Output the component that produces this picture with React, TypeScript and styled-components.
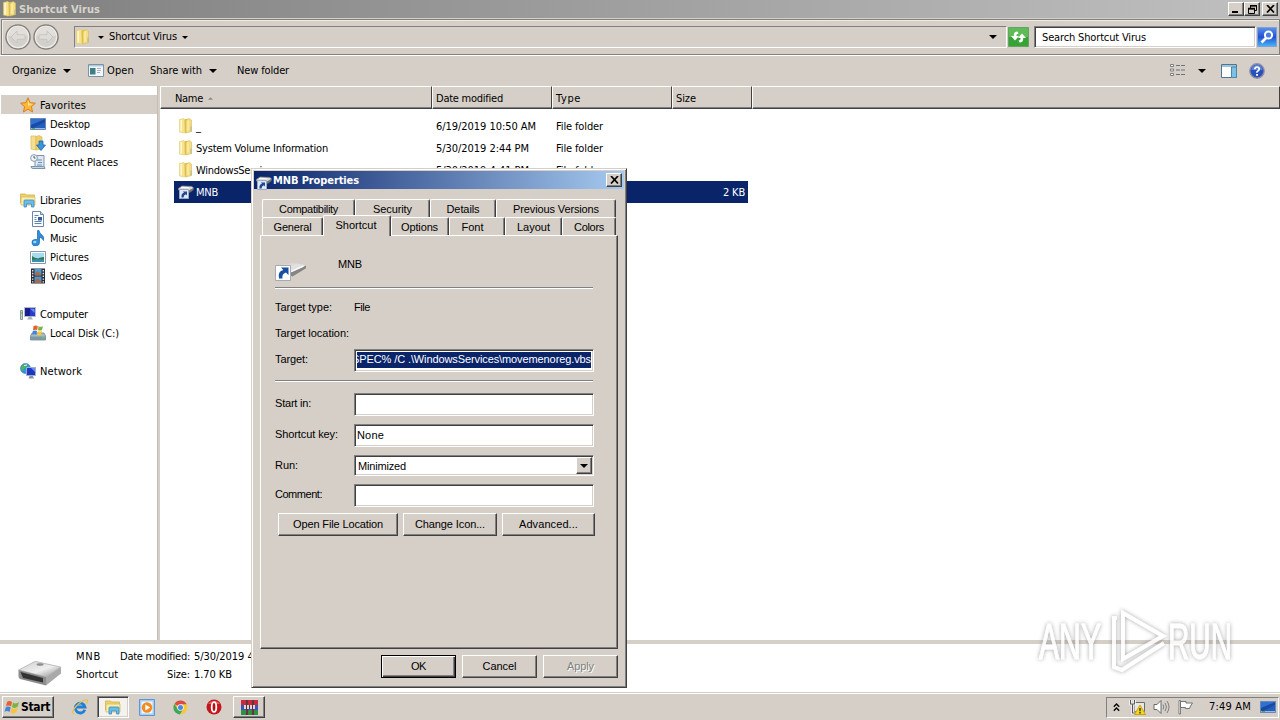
import React, { useLayoutEffect, useRef, useState } from "react";
import styled, { createGlobalStyle, css } from "styled-components";

const face = "#d5cfc8";
const navy = "#0a246a";
const ui = `"DejaVu Sans Condensed", "DejaVu Sans", sans-serif`;
const dlg = `"Liberation Sans", sans-serif`;

const Global = createGlobalStyle`
  body { margin: 0; background: #fff; overflow: hidden; }
  * { box-sizing: border-box; }
  svg { display: block; flex: none; }
`;

const raised = css`
  border: 1px solid;
  border-color: #fff #404040 #404040 #fff;
  box-shadow: inset -1px -1px 0 #808080;
  background: ${face};
`;
const sunken = css`
  border: 1px solid;
  border-color: #808080 #fff #fff #808080;
  box-shadow: inset 1px 1px 0 #404040, inset -1px -1px 0 #d5cfc8;
  background: #fff;
`;

/* ---------- text ---------- */
const CaptionText = styled.span`
  white-space: pre;
  flex: none;
  padding-top: var(--drop);
`;
function Caption({ w, children }: { w: number; children: string }) {
  const ref = useRef<HTMLSpanElement>(null);
  const [spacing, setSpacing] = useState(0);
  useLayoutEffect(() => {
    const natural = ref.current!.getBoundingClientRect().width;
    setSpacing((w - natural) / children.length);
  }, [w, children]);
  return (
    <CaptionText ref={ref} style={{ letterSpacing: spacing }}>
      {children}
    </CaptionText>
  );
}

/* ---------- shell ---------- */
const Screen = styled.div`
  --drop: 2px;
  position: relative;
  width: 1280px;
  height: 720px;
  overflow: hidden;
  display: flex;
  flex-direction: column;
  background: #fff;
  color: #000;
  font: 11px/14px ${ui};
`;
const TitleBar = styled.div`
  height: 18px;
  flex: none;
  display: flex;
  align-items: center;
  padding: 0 2px 0 2px;
  background: linear-gradient(90deg, #808080, #c0c0c0);
  color: #d8d4cc;
  font-weight: bold;
`;
const TitleText = styled.div`
  display: flex;
  flex: 1;
  margin-left: 1px;
`;
const WinButton = styled.div<{ $gap?: number }>`
  ${raised}
  width: 16px;
  height: 14px;
  margin-left: ${(p) => p.$gap ?? 0}px;
  display: flex;
  align-items: center;
  justify-content: center;
`;
const AddressRow = styled.div`
  height: 36px;
  flex: none;
  margin-left: 1px;
  margin-top: 1px;
  display: flex;
  align-items: center;
  padding: 0 1px 0 3px;
  background: ${face};
  border: 1px solid #808080;
  box-shadow: inset 1px 1px 0 #eeeae4;
`;
const TopArea = styled.div`
  background: ${face};
  display: flex;
  flex-direction: column;
  flex: none;
`;
const AddressBox = styled.div`
  --drop: 0px;
  border: 1px solid;
  border-color: #808080 #fff #fff #808080;
  height: 22px;
  width: 933px;
  margin-left: 13px;
  display: flex;
  align-items: center;
  padding: 0 9px 0 0;
`;
const Grow = styled.div`
  flex: 1;
`;
const Gap = styled.div<{ $w: number }>`
  width: ${(p) => p.$w}px;
  flex: none;
`;
const SearchBox = styled.div`
  ${sunken}
  width: 222px;
  height: 22px;
  margin-left: 5px;
  display: flex;
  align-items: center;
  padding-left: 7px;
`;
const Toolbar = styled.div`
  --drop: 0px;
  height: 31px;
  flex: none;
  display: flex;
  align-items: center;
  padding: 0 15px 1px 12px;
  border-top: 1px solid #fff;
`;

/* ---------- explorer body ---------- */
const Body = styled.div`
  flex: none;
  height: 554px;
  display: flex;
`;
const Sidebar = styled.div`
  width: 157px;
  padding: 9px 0 0 1px;
  display: flex;
  flex-direction: column;
`;
const NavRow = styled.div<{ $child?: boolean; $on?: boolean; $space?: boolean }>`
  height: 19px;
  flex: none;
  display: flex;
  align-items: center;
  gap: 4px;
  padding-left: ${(p) => (p.$child ? 29 : 19)}px;
  margin-top: ${(p) => (p.$space ? 19 : 0)}px;
  background: ${(p) => (p.$on ? face : "transparent")};
`;
const Splitter = styled.div`
  width: 3px;
  background: ${face};
  border-left: 1px solid #c2beb6;
`;
const ListPane = styled.div`
  flex: 1;
  display: flex;
  flex-direction: column;
`;
const HeaderRow = styled.div`
  display: flex;
  height: 23px;
  flex: none;
`;
const HeaderCell = styled.div<{ $w?: number; $pad: number }>`
  ${(p) => (p.$w ? `width: ${p.$w}px;` : "flex: 1;")}
  border: 1px solid;
  border-color: #fff #404040 #404040 #fff;
  box-shadow: inset 0 -1px 0 #808080;
  background: ${face};
  padding: 1px 0 0 ${(p) => p.$pad}px;
  display: flex;
  align-items: center;
  gap: 5px;
`;
const Files = styled.div`
  padding: 6px 0 0 14px;
`;
const FileRow = styled.div<{ $on?: boolean }>`
  display: grid;
  grid-template-columns: 258px 120px 119px 74px 3px;
  width: 574px;
  height: 22px;
  align-items: center;
  background: ${(p) => (p.$on ? navy : "transparent")};
  color: ${(p) => (p.$on ? "#fff" : "#000")};
`;
const FileName = styled.div`
  display: flex;
  align-items: center;
  gap: 2px;
  padding-left: 4px;
`;
const Cell = styled.div<{ $right?: boolean }>`
  display: flex;
  padding-left: 4px;
  justify-content: ${(p) => (p.$right ? "flex-end" : "flex-start")};
`;
const DetailsPane = styled.div`
  height: 52px;
  flex: none;
  border-top: 4px solid ${face};
  display: flex;
  padding: 3px 0 0 17px;
`;
const DetailsGrid = styled.div`
  display: grid;
  grid-template-columns: 44px 70px 60px;
  grid-auto-rows: 18px;
  align-items: center;
  margin-left: 13px;
`;
const DCell = styled.div<{ $right?: boolean; $pad?: number }>`
  display: flex;
  padding-left: ${(p) => p.$pad ?? 0}px;
  justify-content: ${(p) => (p.$right ? "flex-end" : "flex-start")};
`;

/* ---------- taskbar ---------- */
const Taskbar = styled.div`
  --drop: 0px;
  flex: 1;
  border-top: 1px solid ${face};
  box-shadow: inset 0 1px 0 #fff;
  background: ${face};
  display: flex;
  align-items: center;
  padding: 1px 1px 0 2px;
`;
const StartButton = styled.div`
  ${raised}
  width: 52px;
  height: 22px;
  display: flex;
  align-items: center;
  gap: 1px;
  padding-left: 1px;
  font-weight: bold;
  font-size: 12px;
`;
const TaskButton = styled.div<{ $pressed?: boolean }>`
  ${(p) => (p.$pressed ? sunken : raised)}
  ${(p) => (p.$pressed ? "background:#f4f2ef;" : "")}
  width: 32px;
  height: 22px;
  display: flex;
  align-items: center;
  justify-content: center;
`;
const Tray = styled.div`
  border: 1px solid;
  border-color: #808080 #fff #fff #808080;
  width: 173px;
  height: 21px;
  display: flex;
  align-items: center;
  padding-left: 6px;
`;

/* ---------- dialog ---------- */
const Dialog = styled.div`
  --drop: 0px;
  position: absolute;
  left: 251px;
  top: 168px;
  width: 376px;
  height: 520px;
  background: ${face};
  border: 1px solid;
  border-color: ${face} #404040 #404040 ${face};
  box-shadow: inset 1px 1px 0 #fff, inset -1px -1px 0 #808080;
  padding: 2px;
  display: flex;
  flex-direction: column;
  font: 11px/14px ${dlg};
`;
const DialogTitle = styled.div`
  --drop: 2px;
  height: 18px;
  flex: none;
  background: linear-gradient(90deg, ${navy}, #a6caf0);
  color: #fff;
  font: bold 11px/14px ${ui};
  display: flex;
  align-items: center;
  padding: 0 2px 0 2px;
`;
const TitleIcon = styled.div`
  padding-top: 5px;
`;
const TabRow = styled.div<{ $front?: boolean }>`
  display: flex;
  align-items: flex-end;
  height: 18px;
  flex: none;
  padding-left: 8px;
  margin-top: ${(p) => (p.$front ? 0 : 10)}px;
`;
const Tab = styled.div<{ $w: number; $on?: boolean; $shift?: number }>`
  width: ${(p) => p.$w}px;
  height: ${(p) => (p.$on ? 21 : 18)}px;
  margin-bottom: ${(p) => (p.$on ? -1 : 0)}px;
  position: relative;
  z-index: ${(p) => (p.$on ? 2 : 0)};
  flex: none;
  background: ${face};
  border: 1px solid;
  border-color: #fff #404040 transparent #fff;
  border-bottom: 0;
  border-radius: 2px 2px 0 0;
  box-shadow: inset -1px 0 0 #808080;
  display: flex;
  justify-content: center;
  padding-top: 2px;
  padding-right: ${(p) => p.$shift ?? 0}px;
`;
const Page = styled.div`
  margin: 0 6px;
  height: 414px;
  flex: none;
  border: 1px solid;
  border-color: #fff #404040 #404040 #fff;
  box-shadow: inset -1px -1px 0 #808080;
  padding: 21px 22px 0 14px;
  display: flex;
  flex-direction: column;
`;
const IconRow = styled.div`
  display: flex;
  height: 30px;
`;
const IconSlot = styled.div`
  padding-top: 3px;
`;
const Rule = styled.div<{ $mt: number }>`
  height: 2px;
  width: 318px;
  flex: none;
  margin-top: ${(p) => p.$mt}px;
  border-top: 1px solid #808080;
  border-bottom: 1px solid #fff;
`;
const Field = styled.div<{ $mt: number; $h: number }>`
  display: grid;
  grid-template-columns: 79px 240px;
  height: ${(p) => p.$h}px;
  margin-top: ${(p) => p.$mt}px;
  flex: none;
`;
const FieldLabel = styled.div`
  display: flex;
  padding-top: 3px;
`;
const Input = styled.div`
  ${sunken}
  display: flex;
  align-items: center;
  padding: 0 2px 2px 2px;
  overflow: hidden;
`;
const ComboInput = styled(Input)`
  padding: 0 1px 0 3px;
`;
const Selected = styled.div`
  display: flex;
  flex: 1;
  height: 16px;
  padding-bottom: 1px;
  align-items: center;
  justify-content: flex-end;
  overflow: hidden;
  background: ${navy};
  color: #fff;
`;
const DropButton = styled.div`
  ${raised}
  width: 16px;
  height: 17px;
  margin-left: auto;
  display: flex;
  align-items: center;
  justify-content: center;
`;
const ButtonRow = styled.div<{ $gap: number }>`
  display: flex;
  gap: ${(p) => p.$gap}px;
`;
const Button = styled.div<{ $w: number; $def?: boolean; $off?: boolean }>`
  ${raised}
  ${(p) => (p.$def ? "border-color:#000; box-shadow: inset 1px 1px 0 #fff, inset -1px -1px 0 #404040, inset -2px -2px 0 #808080;" : "")}
  ${(p) => (p.$off ? "color:#808080; text-shadow: 1px 1px 0 #fff;" : "")}
  width: ${(p) => p.$w}px;
  height: 23px;
  flex: none;
  display: flex;
  align-items: center;
  justify-content: center;
  padding-bottom: 1px;
`;
const PageButtons = styled(ButtonRow)`
  margin: 6px 0 0 3px;
`;
const Footer = styled(ButtonRow)`
  justify-content: flex-end;
  margin: 6px 6px 0 0;
`;
const Watermark = styled.svg`
  position: absolute;
  left: 1030px;
  top: 600px;
  overflow: visible;
`;

/* ---------- icons ---------- */
const Arrow = ({ w = 8, c = "#000" }: { w?: number; c?: string }) => (
  <svg width={w} height={w / 2} viewBox="0 0 8 4"><path d="M0 0h8L4 4z" fill={c} /></svg>
);
const Folder = () => (
  <svg width="16" height="16" viewBox="0 0 16 16">
    <path d="M1.500 1.500L6 .5l1 1v13l-1 .5-4.500-1z" fill="#f6e391" stroke="#e2c972" strokeWidth=".6" />
    <path d="M6.500 1.500L9.500.5v13L7 15.500z" fill="#e4bf4c" />
    <path d="M8 2.500l3-2 2.500 1.500v11.500L8 15z" fill="#f5de82" stroke="#dcb850" strokeWidth=".6" />
    <path d="M3.200 2v11.500" stroke="#fff7cf" strokeWidth="1.500" />
    <path d="M10 2.500v10" stroke="#fbeeb0" strokeWidth="1.300" />
    <path d="M13 8.500v5" stroke="#a3b89a" />
  </svg>
);
const Star = () => (
  <svg width="16" height="16" viewBox="0 0 16 16">
    <path d="M8 .8l2.100 4.900 5.300.5-4 3.500 1.200 5.300L8 12.200 3.400 15l1.200-5.300-4-3.500 5.300-.5z" fill="#fbb938" stroke="#e07c1c" />
    <path d="M8 3l1.300 3.600 3.500.3L8 9z" fill="#ffe58a" />
  </svg>
);
const Monitor = () => (
  <svg width="16" height="16" viewBox="0 0 16 16">
    <path d="M.5 2.500h15v11H.5z" fill="#1a4aa6" stroke="#6c88b4" />
    <path d="M1 3h14L1 9z" fill="#2f72d2" />
    <path d="M3 12l12-6v6z" fill="#2360bd" />
    <path d="M1 12.500h14" stroke="#9db9d8" />
    <path d="M2 12.500h3" stroke="#49ae4f" />
  </svg>
);
const Downloads = () => (
  <svg width="16" height="16" viewBox="0 0 16 16">
    <path d="M1 1h5v14l-5-1z" fill="#f5df8e" stroke="#d9b757" strokeWidth=".7" />
    <path d="M6 1.500L9 .5l3 1.500v12l-6 1z" fill="#efcf6c" stroke="#d9b757" strokeWidth=".7" />
    <path d="M9 6h4v4h2.500L11 15.500 6.500 10H9z" fill="#3a95dc" stroke="#1d65aa" strokeWidth=".8" />
  </svg>
);
const Recent = () => (
  <svg width="16" height="16" viewBox="0 0 16 16">
    <path d="M5 1.500h9v12H5z" fill="#dde8f2" stroke="#7f93a8" />
    <path d="M1 12.500h12q2 0 2 2H3q-2 0-2-2z" fill="#c9d7e4" stroke="#7f93a8" />
    <path d="M7 6h5M8 8.500h4M7 11h5" stroke="#668db5" />
    <circle cx="4" cy="4" r="3.400" fill="#eef3f8" stroke="#8b9aab" />
    <path d="M4 2v2h1.500" stroke="#45617d" fill="none" />
  </svg>
);
const Libraries = () => (
  <svg width="16" height="16" viewBox="0 0 16 16">
    <path d="M.5 3.500V2h5l1 1h8v8H.5z" fill="#f0d26a" stroke="#cfae4b" strokeWidth=".8" />
    <path d="M1 5h14v8H1z" fill="#fbeea9" stroke="#d7bb5f" strokeWidth=".8" />
    <path d="M4 15V9q0-1 1-1h8q1 0 1 1v6h-2.500v-3h-5v3z" fill="#6cbce6" stroke="#3b8cc0" strokeWidth=".8" />
  </svg>
);
const Doc = () => (
  <svg width="16" height="16" viewBox="0 0 16 16">
    <path d="M2.500.5h8l3 3v12h-11z" fill="#fff" stroke="#6d87a8" />
    <path d="M10.500.5v3h3" fill="#c8d8e8" stroke="#6d87a8" />
    <path d="M4.500 4.500h4M4.500 6.500h2M4.500 8.500h2M4.500 10.500h7M4.500 12.500h7" stroke="#5a85b4" />
    <path d="M8 6h4v3.500H8z" fill="#335c9d" />
  </svg>
);
const Note = () => (
  <svg width="16" height="16" viewBox="0 0 16 16">
    <path d="M7.500.5H9q.5 3 3 4.500t1.500 5.500q-1-2.500-4-3.500v5.500q0 3-3.500 3.500T2 13t3-3.500 2.500 0z" fill="#2f8fd8" stroke="#1d67ad" strokeWidth=".7" />
    <ellipse cx="4.800" cy="12" rx="1.700" ry="1.200" fill="#9cd6f6" />
  </svg>
);
const Picture = () => (
  <svg width="16" height="16" viewBox="0 0 16 16">
    <path d="M.5 2.500h15v12H.5z" fill="#fff" stroke="#8799ab" />
    <path d="M2 4h12v5H2z" fill="#a5daf0" />
    <path d="M2 7q4 3 7 2t5-1v4H2z" fill="#2f7d55" />
    <path d="M2 11q6-1.500 12 0v2H2z" fill="#3c90b8" />
  </svg>
);
const Video = () => (
  <svg width="16" height="16" viewBox="0 0 16 16">
    <path d="M1 .5h14v15H1z" fill="#262a35" />
    <path d="M4.500 1h7v6.500h-7zM4.500 8.500h7V15h-7z" fill="#4a9cd2" />
    <path d="M5 5l3-2 3 3v1.500H5zM5 12l3-2 3 3v2H5z" fill="#a46b53" />
    <path d="M2.700 2v13M13.300 2v13" stroke="#e5e9ee" strokeWidth="1.400" strokeDasharray="1.400 1.400" />
  </svg>
);
const Computer = () => (
  <svg width="16" height="16" viewBox="0 0 16 16">
    <path d="M.5 4.500h2v9h-2z" fill="#c7d4c9" stroke="#8b9a90" />
    <path d="M4.500 1.500h11v9h-11z" fill="#2a3ccc" stroke="#b3bbc9" />
    <path d="M5 2h5v8H5z" fill="#1a1e90" />
    <path d="M10 2.500l4.500.5v4z" fill="#6f8cf0" />
    <path d="M8.500 11h3l1.500 2.500H7z" fill="#a9b3bd" />
    <path d="M1 7h2" stroke="#45b54b" />
  </svg>
);
const Flag4 = ({ s = 16 }: { s?: number }) => (
  <svg width={s} height={s} viewBox="0 0 16 16">
    <path d="M3 3q2.500-2 5 0L7 7.500q-2.500-2-5 0z" fill="#e8602c" />
    <path d="M9 3.500q3 2 6-.5l-1.200 4.500q-3 2.500-5.800.5z" fill="#7cb342" />
    <path d="M1.700 8.500q2.500-2 5 0L5.500 13q-2.500-2-5 0z" fill="#3f87dc" />
    <path d="M7.700 9q3 2 6-.5L12.500 13q-3 2.500-6 .5z" fill="#f9c62f" />
  </svg>
);
const LocalDisk = () => (
  <svg width="16" height="16" viewBox="0 0 16 16">
    <path d="M2 8h12l1.500 3v4H.5v-4z" fill="#a9bcc6" stroke="#71858f" strokeWidth=".8" />
    <path d="M.5 11.500h15V15H.5z" fill="#7d97a3" />
    <path d="M12 13h2.500" stroke="#5be05e" />
    <path d="M3.500 1q2-1 4.300 0l-.6 4.300q-2-1-4.200 0z" fill="#e8602c" />
    <path d="M8.500 1.200q2 1.200 4.500 0l-1 3.800q-2 1-4 0z" fill="#7cb342" />
    <path d="M2.800 6q2-1 4.200 0L6.500 9.700q-2-1-4.300 0z" fill="#3f87dc" />
    <path d="M7.700 5.900q2 1 4.300 0L11 10q-2 .8-4-.3z" fill="#f9c62f" />
  </svg>
);
const Network = () => (
  <svg width="16" height="16" viewBox="0 0 16 16">
    <circle cx="5.500" cy="5.500" r="5" fill="#2e98cf" stroke="#2378ac" strokeWidth=".6" />
    <path d="M2 3q3-3 6-1L5 4.500 2 8Q0 6 2 3z" fill="#56b551" />
    <path d="M4 2.500l3-.5" stroke="#e5f6fb" />
    <path d="M6.500 4.500h9v8h-9z" fill="#1e36c4" stroke="#9fb0c6" />
    <path d="M11 5h4v4z" fill="#6a8cf0" />
    <path d="M9.500 13h3.500l1 2.500H8.500z" fill="#8795a2" />
  </svg>
);
const Shortcut = () => (
  <svg width="16" height="16" viewBox="0 0 16 16">
    <path d="M.5 4.500L4 2l10 .5 1.500 1.500-3 3.500H9L.5 6z" fill="#dcdcdc" stroke="#8e8e8e" strokeWidth=".7" />
    <path d="M3 3.500l8 .3" stroke="#fff" />
    <path d="M10.500 6.500L15.500 4v2l-4 3z" fill="#777" />
    <path d="M1.500 5.500h9v9h-9z" fill="#dfe6f4" stroke="#9aa8c4" />
    <path d="M3.500 13.500q-.5-4 2.500-4.800L4.800 7.500H9v4L7.800 10.200Q5.500 11 5.500 13.500z" fill="#1e478e" />
  </svg>
);
const BigShortcut = () => (
  <svg width="32" height="22" viewBox="0 0 32 22">
    <path d="M3 5.500l14-2.500 13 2-13 8z" fill="#ddd8d3" />
    <path d="M14 6l8-2.500 9 2-10 6.500-7-2z" fill="#e0e0e0" />
    <path d="M15.500 12.500L31 5.500v2.800L17.500 16.500l-2-1z" fill="#858585" />
    <path d="M16 11.500L28.500 6" stroke="#fafafa" strokeWidth="1.500" />
    <path d="M.5 5.500h15v15H.5z" fill="#fff" stroke="#a5a9b1" />
    <path d="M4 18.500q-1.500-7.500 4.300-8.500L6 7.500h7.500V15l-2.600-2.500Q6.500 14 7.500 18.500z" fill="#194f9e" />
  </svg>
);
const Drive = () => (
  <svg width="46" height="42" viewBox="0 0 46 42">
    <defs>
      <linearGradient id="drv" x1="0" y1="0" x2="1" y2="1">
        <stop offset="0" stopColor="#cfcfcf" /><stop offset=".55" stopColor="#efefef" /><stop offset="1" stopColor="#8b8b8b" />
      </linearGradient>
    </defs>
    <path d="M1.500 23L17 15q2-1 4 0l22.500 5L29 30z" fill="url(#drv)" stroke="#b0b0b0" strokeWidth=".8" />
    <path d="M1.500 23L29 30v8.500L3 32q-1.500-1-1.500-3z" fill="#8c8c8c" />
    <path d="M3.500 25L26 31v4.500L6 31z" fill="#333" />
    <path d="M29 30l15-10v6.500L29 38.500z" fill="#a9a9a9" />
    <ellipse cx="23" cy="17.500" rx="3.500" ry="1.200" fill="#8c8c8c" />
  </svg>
);
const OpenIcon = () => (
  <svg width="16" height="13" viewBox="0 0 16 13">
    <path d="M.5.5h15v12H.5z" fill="#f5f8fa" stroke="#7a93a8" />
    <path d="M1 1h14v1.500H1z" fill="#b3cad9" />
    <path d="M2 4h5.500v6.500H2z" fill="#3e7f86" />
    <path d="M9 4.500h4M9 6.500h4M9 8.500h3" stroke="#a2b0bd" />
  </svg>
);
const NavCircle = ({ back }: { back?: boolean }) => (
  <svg width="26" height="26" viewBox="0 0 26 26">
    <circle cx="13" cy="13" r="12" fill="#d3cfca" stroke="#84827f" strokeWidth="1.500" />
    <circle cx="13" cy="13" r="10.600" fill="none" stroke="#eeece9" strokeWidth="1.200" />
    <path d="M3.500 12a9.500 9.500 0 0 1 19 0z" fill="#e2dfdb" />
    <path transform={back ? "" : "matrix(-1 0 0 1 26 0)"} d="M6 13l6-6v3.700h8v4.600h-8V19z" fill="#dfdcd7" stroke="#c6c2bc" strokeWidth=".9" />
  </svg>
);
const Refresh = () => (
  <svg width="21" height="20" viewBox="0 0 21 20">
    <path d="M.5.5h20v19H.5z" fill="#37a336" stroke="#62a560" />
    <path d="M1 1h19v9H1z" fill="#5fba58" />
    <path d="M9.500 4.500Q5.500 4.500 5.800 9H3l4 4.500L11 9H8.300Q8.300 6.500 10.500 6.500z" fill="#fff" />
    <path d="M11.500 15.500q4 0 3.700-4.500H18l-4-4.500L10 11h2.700q0 2.500-2.200 2.500z" fill="#fff" />
  </svg>
);
const SearchBtn = () => (
  <svg width="20" height="20" viewBox="0 0 20 20">
    <defs><linearGradient id="sb" x2="0" y2="1"><stop offset="0" stopColor="#5d92e6" /><stop offset=".5" stopColor="#2450d8" /><stop offset="1" stopColor="#48b7f2" /></linearGradient></defs>
    <path d="M.5.5h19v19H.5z" fill="url(#sb)" stroke="#7da2dd" />
    <circle cx="11.500" cy="8" r="3.600" fill="#4a7ee6" stroke="#fff" strokeWidth="2" />
    <path d="M9 11l-4.500 4.500" stroke="#fff" strokeWidth="2.600" />
  </svg>
);
const ViewIcon = () => (
  <svg width="16" height="13" viewBox="0 0 16 13">
    <path d="M.5.5h3v2h-3zM.5 5h3v2h-3zM.5 9.500h3v2h-3z" fill="#fff" stroke="#7c7c80" />
    <path d="M6 1.500h4m1 0h4M6 6h4m1 0h4M6 10.500h4m1 0h4" stroke="#6d7279" />
  </svg>
);
const PaneIcon = () => (
  <svg width="16" height="14" viewBox="0 0 16 14">
    <path d="M.5.500h15v13H.5z" fill="#fff" stroke="#4f7590" />
    <path d="M1 1h14v2H1z" fill="#9ec3da" />
    <path d="M10.500 3v10.500h5V3z" fill="#7cc0e6" stroke="#4f86a8" />
  </svg>
);
const Help = () => (
  <svg width="16" height="16" viewBox="0 0 16 16">
    <circle cx="8" cy="8" r="7.200" fill="#2a4fb8" stroke="#8c93ab" strokeWidth="1.400" />
    <path d="M2.500 7a5.500 5 0 0 1 11 0z" fill="#5f83da" />
    <path d="M5.800 6.300Q6 4 8.100 4t2.100 2.100Q10 7.300 8.800 7.900T8 9.700" fill="none" stroke="#fff" strokeWidth="1.700" />
    <path d="M7.100 11h1.900v1.800H7.100z" fill="#fff" />
  </svg>
);
const IE = () => (
  <svg width="18" height="18" viewBox="0 0 18 18">
    <path d="M13.800 11.800A4.900 4.900 0 1 1 14 9H5.500" fill="none" stroke="#1f80d8" strokeWidth="2.800" />
    <path d="M2.500 16Q0 13.500 6 7.500T16 2q1.500 1-.4 3.600" fill="none" stroke="#e8c04a" strokeWidth="1.200" />
  </svg>
);
const Media = () => (
  <svg width="16" height="17" viewBox="0 0 16 17">
    <path d="M.5.500h15v16H.5z" fill="#a9cdf0" stroke="#5d96d4" />
    <path d="M2.500 2.500h11v12h-11z" fill="#eef6fd" />
    <circle cx="8" cy="8.500" r="5.200" fill="#f38b1d" />
    <path d="M6.300 5.400v6.200L11.300 8.500z" fill="#fff" />
  </svg>
);
const Chrome = () => (
  <svg width="15" height="15" viewBox="0 0 16 16">
    <circle cx="8" cy="8" r="7.300" fill="#f8c934" />
    <path d="M8 8L1.500 4.200A7.500 7.500 0 0 1 14.600 4.500H8z" fill="#dd4b3e" />
    <path d="M1.500 4.200A7.500 7.500 0 0 0 7.300 15.500L11 9.700 8 8 5 9.500z" fill="#3fa75a" />
    <circle cx="8" cy="8" r="3.500" fill="#f5f8fb" /><circle cx="8" cy="8" r="2.700" fill="#4a87e8" />
  </svg>
);
const Opera = () => (
  <svg width="16" height="16" viewBox="0 0 16 16">
    <circle cx="8" cy="8" r="7.500" fill="#c8141b" />
    <path d="M2 5a7 6 0 0 1 12 0z" fill="#e65a58" />
    <ellipse cx="8" cy="8" rx="2.300" ry="4.900" fill="#b30f16" stroke="#fff" strokeWidth="1.800" />
  </svg>
);
const Rar = () => (
  <svg width="17" height="15" viewBox="0 0 17 15">
    <path d="M0 0h17v5H0z" fill="#c92a3e" /><path d="M0 5h17v5H0z" fill="#3858b8" /><path d="M0 10h17v5H0z" fill="#2f8f45" />
    <path d="M5 0h2v15H5zM11 0h2v15h-2z" fill="#6a3140" />
    <path d="M3 5h11v4H3z" fill="#e3d6cf" /><path d="M5.500 5v4M8.500 5v4M11.500 5v4" stroke="#4b3340" />
  </svg>
);
const TrayArrows = () => (
  <svg width="7" height="9" viewBox="0 0 7 9"><path d="M.8 3.800L3.500 1l2.700 2.800M.8 7.800L3.500 5l2.700 2.800" fill="none" stroke="#000" strokeWidth="1.300" /></svg>
);
const TrayNet = () => (
  <svg width="17" height="16" viewBox="0 0 17 16">
    <path d="M5 3.500h10.500v9H5z" fill="#e9e7e3" stroke="#6c6c6c" />
    <path d="M1.500 1v4h4V1M3.500 5v9h4" fill="none" stroke="#fff" strokeWidth="2.600" />
    <path d="M1.500 1v4h4V1M3.500 5v9h4" fill="none" stroke="#555" strokeWidth="1.100" />
    <path d="M11 6l5.500 9.500h-11z" fill="#f9d616" stroke="#b99800" strokeWidth=".8" />
    <path d="M11 9v3.200M11 13v1.400" stroke="#222" strokeWidth="1.300" />
  </svg>
);
const Speaker = () => (
  <svg width="17" height="16" viewBox="0 0 17 16">
    <path d="M1 5.500h3L8 1.500v13L4 10.500H1z" fill="#fff" stroke="#686868" />
    <path d="M10 5.500q1.500 2.500 0 5M12 3.800q3 4.200 0 8.400M14 2q4 6 0 12" fill="none" stroke="#808080" />
  </svg>
);
const TrayFlag = () => (
  <svg width="17" height="16" viewBox="0 0 17 16">
    <path d="M2 1.500h1.500V15H2z" fill="#fff" stroke="#666" strokeWidth=".8" />
    <path d="M3.500 2.500H9V4h6.500l-2 3-1 2.500H8.500V8.500h-5z" fill="#fff" stroke="#666" strokeWidth=".9" />
  </svg>
);

/* ---------- data ---------- */
const nav: { t: string; w: number; icon: React.ReactNode; child?: boolean; on?: boolean; space?: boolean }[] = [
  { t: "Favorites", w: 46, icon: <Star />, on: true },
  { t: "Desktop", w: 40, icon: <Monitor />, child: true },
  { t: "Downloads", w: 53, icon: <Downloads />, child: true },
  { t: "Recent Places", w: 68, icon: <Recent />, child: true },
  { t: "Libraries", w: 41, icon: <Libraries />, space: true },
  { t: "Documents", w: 54, icon: <Doc />, child: true },
  { t: "Music", w: 27, icon: <Note />, child: true },
  { t: "Pictures", w: 39, icon: <Picture />, child: true },
  { t: "Videos", w: 32, icon: <Video />, child: true },
  { t: "Computer", w: 48, icon: <Computer />, space: true },
  { t: "Local Disk (C:)", w: 69, icon: <LocalDisk />, child: true },
  { t: "Network", w: 42, icon: <Network />, space: true },
];
const files: { n: string; nw: number; d?: string; dw?: number; size?: string }[] = [
  { n: "_", nw: 7, d: "6/19/2019 10:50 AM", dw: 100 },
  { n: "System Volume Information", nw: 132, d: "5/30/2019 2:44 PM", dw: 93 },
  { n: "WindowsServices", nw: 82, d: "5/30/2019 4:41 PM", dw: 93 },
  { n: "MNB", nw: 22, size: "2 KB" },
];
const backTabs: [string, number, number][] = [["Compatibility", 93, 59], ["Security", 75, 39], ["Details", 66, 33], ["Previous Versions", 120, 86]];

export default function App() {
  return (
    <Screen>
      <Global />
      <TopArea>
        <TitleBar>
          <Folder />
          <TitleText><Caption w={81}>Shortcut Virus</Caption></TitleText>
          <WinButton><svg width="8" height="8"><path d="M0 6h6v2H0z" /></svg></WinButton>
          <WinButton><svg width="9" height="9" viewBox="0 0 9 9"><path d="M2.500 3V1h6v4.500H7M.5 4h6v4.500h-6z" fill="none" stroke="#000" /><path d="M2 .5h7M0 3.500h7" stroke="#000" strokeWidth="1.500" /></svg></WinButton>
          <WinButton $gap={2}><svg width="9" height="8" viewBox="0 0 9 8"><path d="M1 0l7 7.500M8 0L1 7.500" stroke="#000" strokeWidth="1.700" /></svg></WinButton>
        </TitleBar>
        <AddressRow>
          <NavCircle back />
          <Gap $w={2} />
          <NavCircle />
          <Gap $w={2} />
          <AddressBox>
            <Folder />
            <Gap $w={7} />
            <Arrow w={6} />
            <Gap $w={5} />
            <Caption w={68}>Shortcut Virus</Caption>
            <Gap $w={5} />
            <Arrow w={6} />
            <Grow />
            <Arrow />
          </AddressBox>
          <Gap $w={1} />
          <Refresh />
          <SearchBox><Caption w={104}>Search Shortcut Virus</Caption></SearchBox>
          <Gap $w={1} />
          <SearchBtn />
        </AddressRow>
        <Toolbar>
          <Caption w={44}>Organize</Caption>
          <Gap $w={7} /><Arrow />
          <Gap $w={17} /><OpenIcon />
          <Gap $w={3} /><Caption w={27}>Open</Caption>
          <Gap $w={16} /><Caption w={52}>Share with</Caption>
          <Gap $w={7} /><Arrow />
          <Gap $w={20} /><Caption w={52}>New folder</Caption>
          <Grow />
          <ViewIcon /><Gap $w={12} /><Arrow />
          <Gap $w={15} /><PaneIcon /><Gap $w={12} /><Help />
        </Toolbar>
      </TopArea>
      <Body>
        <Sidebar>
          {nav.map((i) => (
            <NavRow key={i.t} $child={i.child} $on={i.on} $space={i.space}>
              {i.icon}<Caption w={i.w}>{i.t}</Caption>
            </NavRow>
          ))}
        </Sidebar>
        <Splitter />
        <ListPane>
          <HeaderRow>
            <HeaderCell $w={272} $pad={14}>
              <Caption w={28}>Name</Caption>
              <svg width="5" height="3" viewBox="0 0 6 3"><path d="M0 3h6L3 0z" fill="#8d8a86" /></svg>
            </HeaderCell>
            <HeaderCell $w={120} $pad={3}><Caption w={67}>Date modified</Caption></HeaderCell>
            <HeaderCell $w={120} $pad={3}><Caption w={25}>Type</Caption></HeaderCell>
            <HeaderCell $w={80} $pad={3}><Caption w={20}>Size</Caption></HeaderCell>
            <HeaderCell $pad={0} />
          </HeaderRow>
          <Files>
            {files.map((f) => (
              <FileRow key={f.n} $on={!!f.size}>
                <FileName>{f.size ? <Shortcut /> : <Folder />}<Caption w={f.nw}>{f.n}</Caption></FileName>
                <Cell>{f.d && <Caption w={f.dw!}>{f.d}</Caption>}</Cell>
                <Cell>{f.d && <Caption w={47}>File folder</Caption>}</Cell>
                <Cell $right>{f.size && <Caption w={22}>{f.size}</Caption>}</Cell>
              </FileRow>
            ))}
          </Files>
        </ListPane>
      </Body>
      <DetailsPane>
        <Drive />
        <DetailsGrid>
          <DCell><Caption w={25}>MNB</Caption></DCell>
          <DCell $right><Caption w={70}>Date modified:</Caption></DCell>
          <DCell $pad={4}><Caption w={93}>5/30/2019 4:41 PM</Caption></DCell>
          <DCell><Caption w={42}>Shortcut</Caption></DCell>
          <DCell $right><Caption w={23}>Size:</Caption></DCell>
          <DCell $pad={4}><Caption w={38}>1.70 KB</Caption></DCell>
        </DetailsGrid>
      </DetailsPane>
      <Taskbar>
        <StartButton><Flag4 /><Caption w={29}>Start</Caption></StartButton>
        <Gap $w={17} /><IE /><Gap $w={8} />
        <TaskButton $pressed><Libraries /></TaskButton>
        <Gap $w={10} /><Media />
        <Gap $w={18} /><Chrome />
        <Gap $w={18} /><Opera />
        <Gap $w={11} />
        <TaskButton><Rar /></TaskButton>
        <Grow />
        <Tray>
          <TrayArrows /><Gap $w={9} /><TrayNet /><Gap $w={7} /><Speaker /><Gap $w={7} /><TrayFlag />
          <Gap $w={15} /><Caption w={42}>7:49 AM</Caption><Gap $w={9} /><Monitor />
        </Tray>
      </Taskbar>

      <Dialog>
        <DialogTitle>
          <TitleIcon><Shortcut /></TitleIcon>
          <Gap $w={1} />
          <Caption w={86}>MNB Properties</Caption>
          <Grow />
          <WinButton><svg width="9" height="8" viewBox="0 0 9 8"><path d="M1 0l7 7.500M8 0L1 7.500" stroke="#000" strokeWidth="1.700" /></svg></WinButton>
        </DialogTitle>
        <TabRow>
          {backTabs.map(([t, w, tw]) => (
            <Tab key={t} $w={w}><Caption w={tw}>{t}</Caption></Tab>
          ))}
        </TabRow>
        <TabRow $front>
          <Tab $w={61}><Caption w={38}>General</Caption></Tab>
          <Tab $w={68} $on $shift={2}><Caption w={41}>Shortcut</Caption></Tab>
          <Tab $w={58} $shift={1}><Caption w={37}>Options</Caption></Tab>
          <Tab $w={56} $shift={9}><Caption w={22}>Font</Caption></Tab>
          <Tab $w={57}><Caption w={33}>Layout</Caption></Tab>
          <Tab $w={54}><Caption w={30}>Colors</Caption></Tab>
        </TabRow>
        <Page>
          <IconRow>
            <IconSlot><BigShortcut /></IconSlot><Gap $w={31} /><Caption w={24}>MNB</Caption>
          </IconRow>
          <Rule $mt={0} />
          <Field $mt={8} $h={20}>
            <FieldLabel><Caption w={57}>Target type:</Caption></FieldLabel>
            <FieldLabel><Caption w={16}>File</Caption></FieldLabel>
          </Field>
          <Field $mt={6} $h={20}>
            <FieldLabel><Caption w={74}>Target location:</Caption></FieldLabel>
          </Field>
          <Field $mt={6} $h={23}>
            <FieldLabel><Caption w={33}>Target:</Caption></FieldLabel>
            <Input><Selected><Caption w={239}>SPEC% /C .\WindowsServices\movemenoreg.vbs</Caption></Selected></Input>
          </Field>
          <Rule $mt={8} />
          <Field $mt={11} $h={23}>
            <FieldLabel><Caption w={36}>Start in:</Caption></FieldLabel>
            <Input />
          </Field>
          <Field $mt={8} $h={23}>
            <FieldLabel><Caption w={63}>Shortcut key:</Caption></FieldLabel>
            <Input><Caption w={27}>None</Caption></Input>
          </Field>
          <Field $mt={8} $h={21}>
            <FieldLabel><Caption w={23}>Run:</Caption></FieldLabel>
            <ComboInput><Caption w={48}>Minimized</Caption><DropButton><Arrow /></DropButton></ComboInput>
          </Field>
          <Field $mt={8} $h={23}>
            <FieldLabel><Caption w={47}>Comment:</Caption></FieldLabel>
            <Input />
          </Field>
          <PageButtons $gap={5}>
            <Button $w={120}><Caption w={90}>Open File Location</Caption></Button>
            <Button $w={94}><Caption w={70}>Change Icon...</Caption></Button>
            <Button $w={93}><Caption w={59}>Advanced...</Caption></Button>
          </PageButtons>
        </Page>
        <Footer $gap={6}>
          <Button $w={75} $def><Caption w={15}>OK</Caption></Button>
          <Button $w={75}><Caption w={34}>Cancel</Caption></Button>
          <Button $w={75} $off><Caption w={27}>Apply</Caption></Button>
        </Footer>
      </Dialog>

      <Watermark width="220" height="84" viewBox="0 0 220 84">
        <defs>
          <filter id="halo" x="-10%" y="-20%" width="120%" height="140%">
            <feDropShadow dx="0" dy="0" stdDeviation="2" floodColor="#666" floodOpacity=".7" />
          </filter>
        </defs>
        <g filter="url(#halo)" fill="#fff" stroke="#fff" strokeWidth="1" fontFamily='"Liberation Sans Narrow", "Liberation Sans", sans-serif' fontSize="50" opacity=".85">
          <text x="9" y="59" textLength="62" lengthAdjust="spacingAndGlyphs">ANY</text>
          <text x="138" y="59" textLength="64" lengthAdjust="spacingAndGlyphs">RUN</text>
          <path d="M93 13L133 36 93 59z" fill="none" strokeWidth="4" />
          <path d="M87 18h-3v49l8 3L134 43" fill="none" strokeWidth="4" />
        </g>
      </Watermark>
    </Screen>
  );
}
